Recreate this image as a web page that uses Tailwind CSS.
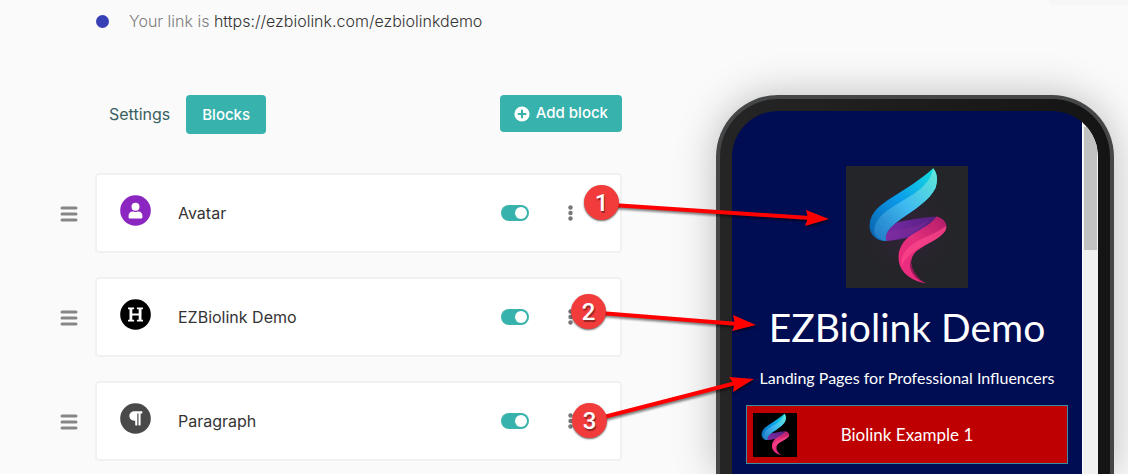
<!doctype html>
<html lang="en">

<head>
  <meta charset="UTF-8">
  <meta name="viewport" content="width=device-width, initial-scale=1.0">
  <title>EZBiolink</title>
  <script src="https://cdn.jsdelivr.net/npm/@tailwindcss/browser@4"></script>
</head>

<body class="bg-[#fafafa] font-['Inter',sans-serif] text-[#343434]">

  <!-- shared shapes -->
  <svg class="absolute size-0">
    <defs>
      <linearGradient id="blue" x1="0" y1="1" x2="1" y2="0">
        <stop offset="0" stop-color="#0b5fa8" />
        <stop offset=".5" stop-color="#0a9bea" />
        <stop offset="1" stop-color="#16dfe0" />
      </linearGradient>
      <linearGradient id="sky" x1="0" y1="1" x2="1" y2="0">
        <stop offset="0" stop-color="#1f78c4" />
        <stop offset=".5" stop-color="#3fbaf0" />
        <stop offset="1" stop-color="#62ead8" />
      </linearGradient>
      <linearGradient id="purple" x1="0" y1="0" x2="1" y2="0">
        <stop offset="0" stop-color="#7a2aa5" />
        <stop offset="1" stop-color="#52207f" />
      </linearGradient>
      <linearGradient id="pink" x1="1" y1="0" x2="0" y2="1">
        <stop offset="0" stop-color="#b01c68" />
        <stop offset=".5" stop-color="#e32f7c" />
        <stop offset="1" stop-color="#f02a80" />
      </linearGradient>
      <radialGradient id="glow">
        <stop offset="0" stop-color="#35213f" />
        <stop offset="1" stop-color="#242528" stop-opacity="0" />
      </radialGradient>
    </defs>
    <symbol id="ribbon" viewBox="48 46 368 368">
      <path fill="url(#purple)" d="M203 216C245 207 285 199 322 198C322 225 270 252 228 263C205 268 185 272 164 272C160 250 178 228 203 216Z" />
      <path fill="#86309c" opacity=".4" d="M172 245C220 238 270 228 300 206C280 240 225 265 164 272Z" />
      <path fill="url(#blue)" d="M311 53C325 70 325 92 318 112C300 150 250 180 220 201C190 222 160 245 170 272C140 274 118 252 119 224C122 185 150 165 185 142C235 111 275 85 311 53Z" />
      <path fill="url(#sky)" d="M311 53C325 70 325 92 318 112C300 150 250 180 220 201C190 222 160 245 170 272C145 270 128 252 134 232C145 190 185 172 225 147C265 125 305 95 311 53Z" />
      <path fill="url(#pink)" d="M321 198C345 204 356 222 349 239C335 265 290 280 262 302C243 318 240 340 250 362C258 380 272 392 289 400C255 394 225 378 212 350C200 318 208 285 235 262C262 240 300 228 321 198Z" />
      <path fill="#ff4a8c" opacity=".65" d="M349 226C325 250 270 262 238 290C218 308 214 330 216 350C222 330 240 312 262 297C290 280 335 265 349 239Z" />
      <path fill="#961a5b" d="M243 322C240 345 258 385 289 400C265 393 246 375 241 350Z" />
    </symbol>
    <symbol id="grip" viewBox="0 0 17 16">
      <path stroke="#868686" stroke-width="3" stroke-linecap="round" d="M1.5 2h14M1.5 8h14M1.5 14h14" />
    </symbol>
    <symbol id="dots" viewBox="0 0 5 16">
      <g fill="#777">
        <circle cx="2.5" cy="2.5" r="2.2" />
        <circle cx="2.5" cy="8" r="2.2" />
        <circle cx="2.5" cy="13.5" r="2.2" />
      </g>
    </symbol>
  </svg>

  <div class="relative flex h-screen gap-[94px] overflow-hidden pl-[60px] pr-[14px]">

    <main class="min-w-0 flex-1">
      <div class="flex h-[42px] items-center gap-5 pl-9">
        <span class="size-[13px] rounded-full bg-[#3740b5]"></span>
        <p class="text-base font-light text-[#7d7d7d]">Your link is <a href="https://ezbiolink.com/ezbiolinkdemo" class="text-[#343434]">https://ezbiolink.com/ezbiolinkdemo</a></p>
      </div>

      <div class="mt-[53px] flex items-start justify-between pl-[33px]">
        <nav class="flex">
          <a href="#settings" class="px-4 py-2 text-base leading-[23px] text-[#39605f]">Settings</a>
          <a href="#blocks" class="rounded bg-[#38b2ac] px-4 py-2 text-[15px] leading-[23px] font-medium text-white">Blocks</a>
        </nav>
        <button type="button" class="flex h-[37px] items-center gap-[6px] rounded bg-[#38b2ac] px-[14px] text-[15px] font-medium text-white">
          <svg class="size-4" viewBox="0 0 16 16">
            <circle cx="8" cy="8" r="7.6" fill="#fff" />
            <path stroke="#38b2ac" stroke-width="2" stroke-linecap="round" d="M8 4.5v7M4.5 8h7" />
          </svg>
          Add block
        </button>
      </div>

      <ul class="mt-[39px] flex flex-col gap-6">
        <li class="flex items-center gap-[17px]">
          <button type="button" aria-label="Move Avatar" class="pt-[2px]"><svg class="h-4 w-[18px]"><use href="#grip" /></svg></button>
          <div class="flex h-20 flex-1 items-center rounded-sm border-2 border-[#f1f1f1] bg-white pr-[47px] pl-[23px]">
            <svg class="mb-[6px] size-[31px]" viewBox="0 0 31 31">
              <circle cx="15.5" cy="15.5" r="15.3" fill="#8b27c0" />
              <circle cx="15.5" cy="11.7" r="4" fill="#fff" />
              <path fill="#fff" d="M8.6 22.2v-1.6c0-2.6 1.8-4.2 4-4.2 1 0 1.5.5 2.9.5s1.9-.5 2.9-.5c2.2 0 4 1.6 4 4.2v1.6c0 .8-.6 1.3-1.3 1.3H9.9c-.7 0-1.3-.5-1.3-1.3z" />
            </svg>
            <label for="avatar" class="flex-1 pl-[27px] text-base">Avatar</label>
            <input id="avatar" type="checkbox" checked class="h-4 w-7 appearance-none rounded-full bg-[#38b2ac] before:mt-[2px] before:ml-[14px] before:block before:size-3 before:rounded-full before:bg-white">
            <button type="button" aria-label="Avatar options" class="ml-[39px]"><svg class="h-4 w-[5px]"><use href="#dots" /></svg></button>
          </div>
        </li>
        <li class="flex items-center gap-[17px]">
          <button type="button" aria-label="Move EZBiolink Demo" class="pt-[2px]"><svg class="h-4 w-[18px]"><use href="#grip" /></svg></button>
          <div class="flex h-20 flex-1 items-center rounded-sm border-2 border-[#f1f1f1] bg-white pr-[47px] pl-[23px]">
            <svg class="mb-[6px] size-[31px]" viewBox="0 0 31 31">
              <circle cx="15.5" cy="15.5" r="15.3" fill="#000" />
              <path stroke="#fff" stroke-width="2.8" d="M10.9 9v13M20.1 9v13" />
              <path stroke="#fff" stroke-width="2" d="M11 15.5h9" />
              <path stroke="#fff" stroke-width="1.7" d="M8 9.4h6.1M16.9 9.4h6.1M8 21.6h6.1M16.9 21.6h6.1" />
            </svg>
            <label for="heading" class="flex-1 pl-[27px] text-base">EZBiolink Demo</label>
            <input id="heading" type="checkbox" checked class="h-4 w-7 appearance-none rounded-full bg-[#38b2ac] before:mt-[2px] before:ml-[14px] before:block before:size-3 before:rounded-full before:bg-white">
            <button type="button" aria-label="EZBiolink Demo options" class="ml-[39px]"><svg class="h-4 w-[5px]"><use href="#dots" /></svg></button>
          </div>
        </li>
        <li class="flex items-center gap-[17px]">
          <button type="button" aria-label="Move Paragraph" class="pt-[2px]"><svg class="h-4 w-[18px]"><use href="#grip" /></svg></button>
          <div class="flex h-20 flex-1 items-center rounded-sm border-2 border-[#f1f1f1] bg-white pr-[47px] pl-[23px]">
            <svg class="mb-[6px] size-[31px]" viewBox="0 0 31 31">
              <circle cx="15.5" cy="15.5" r="15.3" fill="#494949" />
              <path fill="#fff" d="M22.4 8.8v1.3c0 .3-.2.5-.5.5h-1.3v11.4c0 .3-.2.5-.5.5h-1.100c-.3 0-.5-.2-.5-.5V10.600h-1.200v11.400c0 .3-.2.5-.5.5h-1.100c-.3 0-.5-.2-.5-.5v-4.200h-.9c-2.700 0-4.900-2.100-4.900-4.700 0-2.800 2.300-4.800 5.200-4.800h7.300c.3 0 .5.2.5.5z" />
            </svg>
            <label for="paragraph" class="flex-1 pl-[27px] text-base">Paragraph</label>
            <input id="paragraph" type="checkbox" checked class="h-4 w-7 appearance-none rounded-full bg-[#38b2ac] before:mt-[2px] before:ml-[14px] before:block before:size-3 before:rounded-full before:bg-white">
            <button type="button" aria-label="Paragraph options" class="ml-[39px]"><svg class="h-4 w-[5px]"><use href="#dots" /></svg></button>
          </div>
        </li>
      </ul>
    </main>

    <!-- phone preview -->
    <aside class="w-[398px] shrink-0 pt-[95px] font-['Lato',sans-serif] text-white">
      <div class="h-full rounded-t-[62px] border-4 border-b-0 border-[#444648] bg-linear-to-r from-[#252525] to-[#141414] px-3 pt-3 shadow-[0_0_40px_rgba(0,0,0,0.25)]">
        <div class="flex h-full overflow-hidden rounded-t-[46px]">
          <div class="flex flex-1 flex-col items-center bg-[#000d53] px-[14px] pt-[55px]">
            <svg class="size-[122px] shrink-0 bg-[#242528]" viewBox="0 0 122 122">
              <circle cx="61" cy="65" r="56" fill="url(#glow)" />
              <use href="#ribbon" width="122" height="122" />
            </svg>
            <h1 class="mt-[15px] text-[39px] leading-[48px]">EZBiolink Demo</h1>
            <p class="mt-[15px] text-base leading-6">Landing Pages for Professional Influencers</p>
            <a href="#example" class="mt-[15px] flex h-[59px] w-full shrink-0 items-center border border-[#3f8ba0] bg-[#bf0000] pl-[6px] pr-[50px] text-[17px]">
              <svg class="size-11 bg-black"><use href="#ribbon" /></svg>
              <span class="flex-1 text-center">Biolink Example 1</span>
            </a>
          </div>
          <div class="w-4 shrink-0 border-l border-white bg-[#f1f1f1] px-px pt-4">
            <div class="h-[123px] bg-[#c1c1c1]"></div>
          </div>
        </div>
      </div>
    </aside>

    <div class="absolute top-0 right-0 h-[5px] w-[79px] rounded-bl bg-[#f6f6f6]"></div>

    <!-- callouts -->
    <div class="pointer-events-none absolute top-0 right-0 h-[474px] w-[568px] font-['Roboto',sans-serif] text-2xl font-medium text-white">
      <svg class="size-full drop-shadow-[1px_2px_1px_rgba(0,0,0,0.5)]" viewBox="560 0 568 474">
        <g stroke="#f00" stroke-width="4">
          <path d="M612 205L810 218" />
          <path d="M600 313L738 324" />
          <path d="M600 418L736 383" />
        </g>
        <g fill="#f00">
          <path d="M829 219L805 226L808 218L806 210Z" />
          <path d="M756 325L732 331L735 324L733 315Z" />
          <path d="M754 379L733 392L734 384L729 377Z" />
        </g>
      </svg>
      <span class="absolute top-[185px] left-6 flex size-[35px] items-center justify-center rounded-full bg-[#f23c3c] shadow-[0_1px_2px_rgba(0,0,0,0.6)] text-shadow-[1px_2px_1px_rgba(0,0,0,0.4)]">1</span>
      <span class="absolute top-[294px] left-[11px] flex size-[35px] items-center justify-center rounded-full bg-[#f23c3c] shadow-[0_1px_2px_rgba(0,0,0,0.6)] text-shadow-[1px_2px_1px_rgba(0,0,0,0.4)]">2</span>
      <span class="absolute top-[403px] left-3 flex size-[35px] items-center justify-center rounded-full bg-[#f23c3c] shadow-[0_1px_2px_rgba(0,0,0,0.6)] text-shadow-[1px_2px_1px_rgba(0,0,0,0.4)]">3</span>
    </div>
  </div>

</body>

</html>
